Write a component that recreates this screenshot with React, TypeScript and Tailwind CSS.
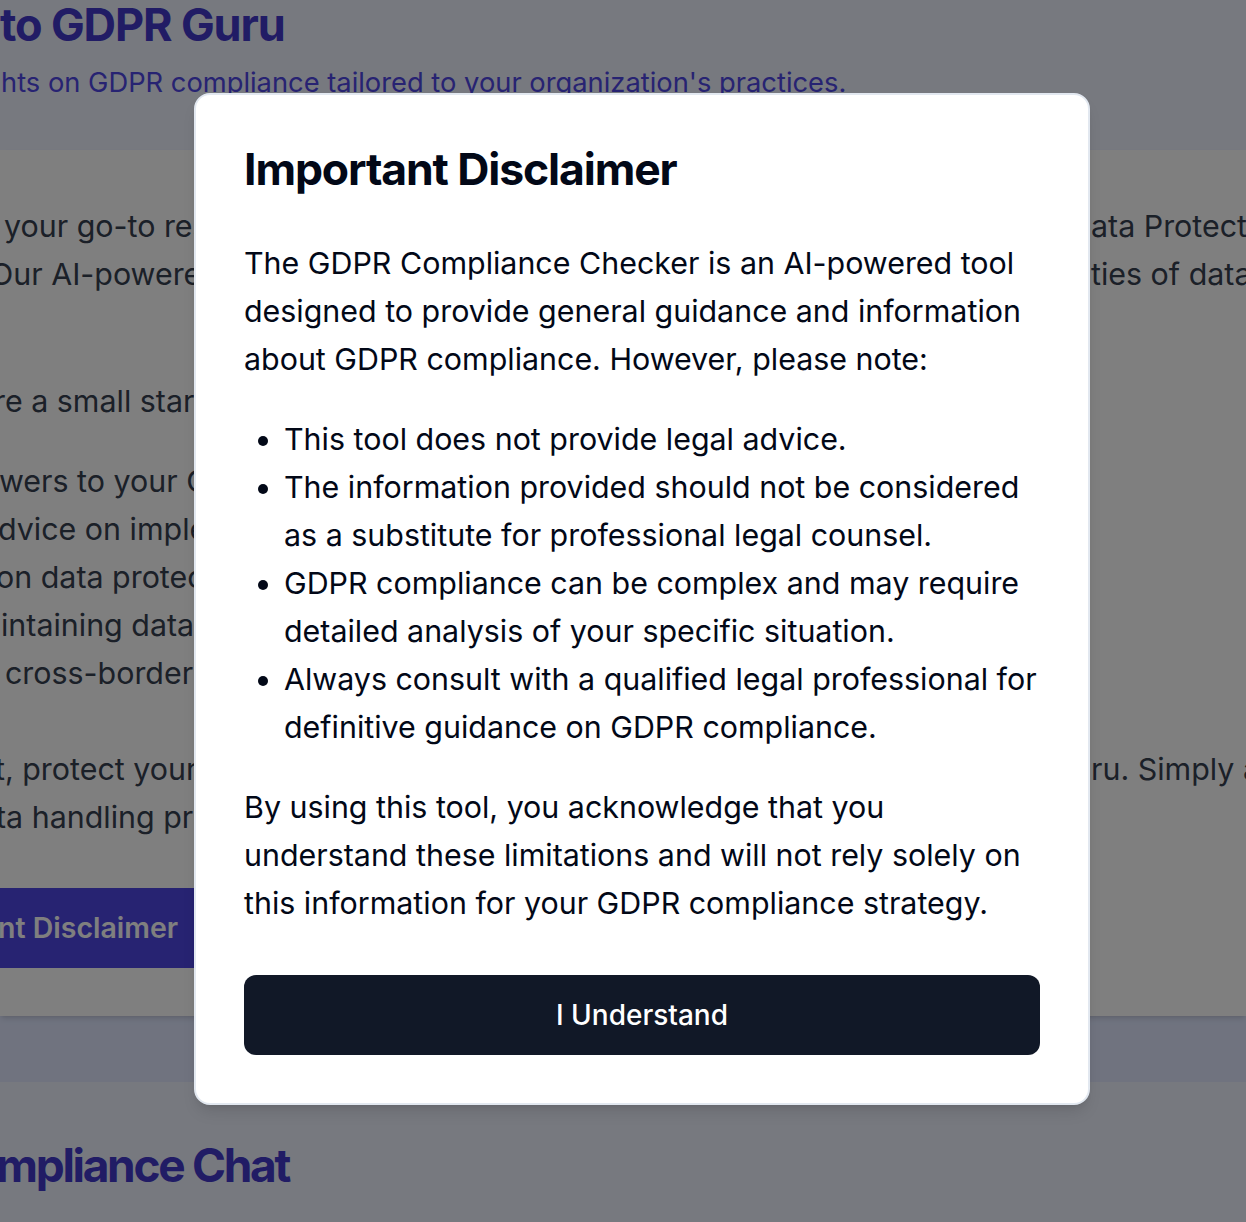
import React from "react";

type Line = {
  left: string;
  shift: string;
  right?: string;
  gap?: string;
};

// what is left visible of the page behind the dialog
const lines: Line[] = [
  { left: "your go-to resource for understanding the", shift: "ml-[4px]", right: "ata Protection Regulation (GDPR)." },
  { left: "Our AI-powered assistant helps you navigate", shift: "-ml-[10px]", right: "ties of data protection law." },
  { left: "re a small startup or a large enterprise,", shift: "-ml-[6px]", gap: "mt-[79px]" },
  { left: "wers to your GDPR questions", shift: "-ml-[1px]", gap: "mt-[32px]" },
  { left: "dvice on implementing compliance measures", shift: "-ml-[2px]" },
  { left: "on data protection best practices", shift: "-ml-[4px]" },
  { left: "intaining data processing records", shift: "ml-[1px]" },
  { left: "cross-border data transfers", shift: "ml-[5px]" },
  { left: "t, protect your customers and build trust", shift: "-ml-[5px]", right: "ru. Simply ask your question below.", gap: "mt-[48px]" },
  { left: "ta handling practices with confidence.", shift: "-ml-[4px]" },
];

const bullets = [
  "This tool does not provide legal advice.",
  "The information provided should not be considered as a substitute for professional legal counsel.",
  "GDPR compliance can be complex and may require detailed analysis of your specific situation.",
  "Always consult with a qualified legal professional for definitive guidance on GDPR compliance.",
];

function PageLine({ line }: { line: Line }) {
  return (
    <div className={`flex h-12 items-center whitespace-nowrap text-[30.4px] leading-[48px] text-[#374151] ${line.gap ?? ""}`}>
      <div className="w-[1090px] shrink-0 overflow-hidden">
        <span className={`inline-block ${line.shift}`}>{line.left}</span>
      </div>
      {line.right && <div className="overflow-hidden pl-[1px]">{line.right}</div>}
    </div>
  );
}

export default function App() {
  return (
    <div className="relative h-[1222px] w-full overflow-hidden bg-[#eef2ff] font-['Inter',sans-serif]">
      <header className="h-[150px] bg-[#eef2ff] pt-[2px]">
        <h1 className="whitespace-nowrap text-[45px] font-bold leading-none tracking-tight text-[#4338ca]">
          to GDPR Guru
        </h1>
        <p className="mt-[16px] whitespace-nowrap pl-[1px] text-[27.3px] leading-[40px] text-[#4f46e5]">
          hts on GDPR compliance tailored to your organization's practices.
        </p>
      </header>

      <section className="relative z-10 h-[866px] bg-white pt-[52px] shadow-md">
        {lines.map((line, i) => (
          <PageLine key={i} line={line} />
        ))}
        <div className="mt-[47px] flex h-[80px] w-[260px] items-center bg-[#4f46e5] text-[28.5px] font-semibold text-white">
          <span className="-ml-[2px] whitespace-nowrap">nt Disclaimer</span>
        </div>
      </section>

      <div className="h-[66px] bg-[#e0e7ff]" />

      <h2 className="mt-[60px] whitespace-nowrap text-[46px] font-bold leading-none tracking-tighter text-[#4338ca]">
        <span className="-ml-[4px] inline-block">mpliance Chat</span>
      </h2>

      {/* dialog */}
      <div className="absolute inset-0 z-20 bg-black/50">
        <div className="absolute left-[194px] top-[93px] w-[896px] rounded-2xl border-2 border-[#e2e8f0] bg-white p-[48px] text-[#020817] shadow-lg">
          <h2 className="mb-[44px] text-[44.5px] font-bold leading-[52px] tracking-tight">Important Disclaimer</h2>
          <p className="mb-[32px] text-[30.4px] leading-[48px]">
            The GDPR Compliance Checker is an AI-powered tool designed to provide general guidance and information
            about GDPR compliance. However, please note:
          </p>
          <ul className="mb-[32px] list-disc pl-[40px] text-[30.4px] leading-[48px]">
            {bullets.map((b) => (
              <li key={b}>{b}</li>
            ))}
          </ul>
          <p className="text-[30.4px] leading-[48px]">
            By using this tool, you acknowledge that you understand these limitations and will not rely solely on
            this information for your GDPR compliance strategy.
          </p>
          <button className="mt-[48px] flex h-[80px] w-full items-center justify-center rounded-[12px] bg-[#111827] text-[28px] font-medium text-white">
            I Understand
          </button>
        </div>
      </div>
    </div>
  );
}
